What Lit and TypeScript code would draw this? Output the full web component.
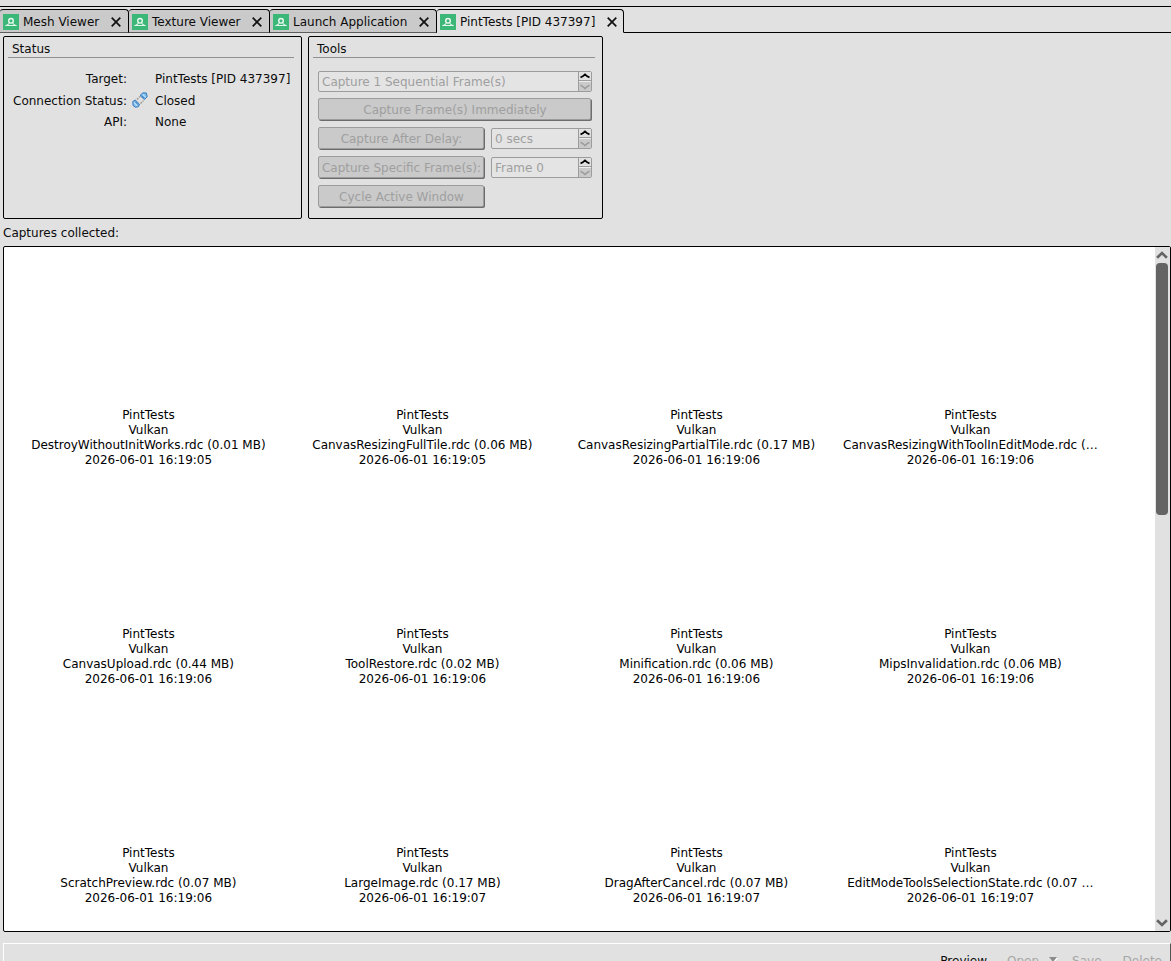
import { LitElement, html, css, svg } from "lit";
import { customElement, property } from "lit/decorators.js";

const base = css`
  * { box-sizing: border-box; }
  svg { display: block; flex: none; }
`;

@customElement("rd-tab")
class RdTab extends LitElement {
  @property() label = "";
  @property({ type: Boolean, reflect: true }) active = false;
  static styles = [base, css`
    :host { display: block; height: 24px; flex: none; }
    .tab {
      display: flex; align-items: center; width: 100%; height: 24px;
      background: #cacaca; border: 1px solid #000; border-left: 0;
      border-bottom-color: #5c5c5c; border-radius: 3px 4px 0 0; padding: 0 7px 0 3px;
    }
    :host([active]) .tab { background: #e1e1e1; border-bottom-color: #e1e1e1; padding-right: 6px; }
    .text { margin-left: 4px; flex: 1; white-space: pre; line-height: 15px; padding-top: 2px; }
    .icon { margin-top: 1px; }
    .close { margin-top: 1px; }
  `];
  render() {
    return html`<div class="tab">
      <svg class="icon" width="16" height="16" viewBox="0 0 16 16">
        <rect width="16" height="16" fill="#3bb878" />
        <circle cx="8" cy="6.8" r="2.3" fill="none" stroke="#effaf4" stroke-width="1.4" />
        <path d="M2.3 11.5H13.7" fill="none" stroke="#e3f6ec" stroke-width="1" />
        <path d="M3.6 11Q5.8 10.6 6.3 8.8M12.4 11Q10.2 10.6 9.7 8.8" fill="none" stroke="#d5f1e2" stroke-width="1.1" />
      </svg>
      <span class="text">${this.label}</span>
      <svg class="close" width="10" height="10" viewBox="0 0 10 10">
        <path d="M.7 .7L9.3 9.3M9.3 .7L.7 9.3" stroke="#111" stroke-width="1.7" />
      </svg>
    </div>`;
  }
}

@customElement("rd-spin")
class RdSpin extends LitElement {
  @property() value = "";
  static styles = [base, css`
    :host { display: block; height: 21px; }
    .box {
      display: flex; height: 21px; border: 1px solid #9c9c9c; border-radius: 2px;
      background: #e4e4e4; color: #9f9f9f;
    }
    .value { flex: 1; padding: 3px 0 0 3px; line-height: 15px; white-space: pre; }
    .steps { width: 13px; border-left: 1px solid #9c9c9c; display: flex; flex-direction: column; }
    .up { height: 9px; border-bottom: 1px solid #9c9c9c; background: #e1e1e1; }
    .down { height: 10px; background: #cacaca; border-top: 1px solid #eee; }
  `];
  render() {
    return html`<div class="box">
      <span class="value">${this.value}</span>
      <div class="steps">
        <div class="up"><svg width="12" height="8" viewBox="0 0 12 8"><path d="M1.5 5.4Q4 4.6 6 2.4Q8 4.6 10.5 5.4" fill="none" stroke="#000" stroke-width="1.7" /></svg></div>
        <div class="down"><svg width="12" height="9" viewBox="0 0 12 9"><path d="M1.5 3.2Q4 4.2 6 6.5Q8 4.2 10.5 3.2" fill="none" stroke="#9c9c9c" stroke-width="1.6" /></svg></div>
      </div>
    </div>`;
  }
}

const captures = [
  ["DestroyWithoutInitWorks.rdc (0.01 MB)", "05"],
  ["CanvasResizingFullTile.rdc (0.06 MB)", "05"],
  ["CanvasResizingPartialTile.rdc (0.17 MB)", "06"],
  ["CanvasResizingWithToolInEditMode.rdc (…", "06"],
  ["CanvasUpload.rdc (0.44 MB)", "06"],
  ["ToolRestore.rdc (0.02 MB)", "06"],
  ["Minification.rdc (0.06 MB)", "06"],
  ["MipsInvalidation.rdc (0.06 MB)", "06"],
  ["ScratchPreview.rdc (0.07 MB)", "06"],
  ["LargeImage.rdc (0.17 MB)", "07"],
  ["DragAfterCancel.rdc (0.07 MB)", "07"],
  ["EditModeToolsSelectionState.rdc (0.07 …", "07"],
];

const plug = svg`
  <path d="M5 7.5L8 4.5M8.5 11.5L11.5 8.5" stroke="#a3a099" stroke-width="1.6" stroke-dasharray="2 1" />
  <path d="M.8 9.5L3.2 8L7.5 12.2L6.5 14.6L3.5 15.3L1 13.5Z" fill="#7cbdf0" stroke="#3a79b5" stroke-width="1" />
  <path d="M8 3.5L11 .8L14.4 1L15.2 4.8L12.4 7.5Z" fill="#7cbdf0" stroke="#3a79b5" stroke-width="1" />
  <path d="M2 10.5L5.2 13.8M10.6 2.4L13.8 5.4" stroke="#b9defa" stroke-width="1.3" />
  <path d="M3 9.5L6.2 12.8M9.6 3.4L12.6 6.4" stroke="#2a6aa8" stroke-width=".8" />
`;

@customElement("app-root")
class AppRoot extends LitElement {
  static styles = [base, css`
    :host {
      display: flex; flex-direction: column; width: 1171px; height: 961px; overflow: hidden;
      background: #e1e1e1; color: #0c0c0c; font: 12px/15px "DejaVu Sans", sans-serif;
    }
    .top { height: 9px; flex: none; padding-top: 6px; }
    .top-line { height: 1px; background: #000; }
    .tabs { display: flex; height: 24px; flex: none; }
    .t1 { width: 129px; } .t2 { width: 141px; } .t3 { width: 167px; } .t4 { width: 187px; }
    .rest { flex: 1; border-bottom: 1px solid #000; }
    .panels { display: flex; gap: 6px; padding: 3px 0 0 3px; flex: none; }
    .panel { height: 183px; border: 1px solid #000; border-radius: 2px; padding: 5px 7px 0 4px; }
    .status { width: 299px; } .tools { width: 295px; }
    .title { height: 16px; border-bottom: 1px solid #919191; padding-left: 4px; line-height: 15px; }
    .fields { display: grid; grid-template-columns: 119px 16px auto; column-gap: 6px; grid-template-rows: 22px 23px 18px; padding-top: 10px; align-items: center; white-space: pre; }
    .lab { text-align: right; }
    .plug { margin: 0 0 3px -1px; }
    .form { display: flex; flex-direction: column; gap: 6px; padding: 13px 3px 0 5px; }
    .line { display: flex; gap: 6px; align-items: center; }
    .small { width: 101px; }
    .btn {
      display: block; height: 22px; width: 166px; margin: 0 1px 1px 0; border: 1px solid #9c9c9c;
      box-shadow: 1px 1px 0 #6c6c6c; border-radius: 2px; background: #cacaca; color: #9f9f9f;
      text-align: center; white-space: pre; line-height: 15px; padding: 4px 0 0 1px; flex: none;
    }
    .btn.full { width: 273px; }
    .caption { height: 27px; padding: 7px 0 0 3px; flex: none; }
    .list { margin-left: 3px; width: 1168px; height: 686px; flex: none; display: flex; border: 1px solid #000; border-radius: 2px; background: #fff; }
    .grid { flex: 1; display: grid; grid-template-columns: repeat(4, 274px); grid-auto-rows: 219px; padding-left: 7.4px; align-content: start; color: #000; }
    .item { padding-top: 161px; text-align: center; white-space: pre; }
    .scroll { width: 15px; background: #e1e1e1; display: flex; flex-direction: column; align-items: center; padding-right: 1px; }
    .thumb { width: 12px; height: 252px; margin-top: 1px; background: #646464; border-radius: 4px; }
    .spacer { flex: 1; }
    .bottom { margin: 11px 0 0 3px; height: 40px; flex: none; border: 1px solid #fff; border-right-color: #555; display: flex; padding: 10px 8px 0 0; justify-content: flex-end; color: #a6a6a6; }
    .preview { color: #0c0c0c; margin-right: 20px; }
    .arrow { margin: 3px 14px 0 10px; }
    .save { margin-right: 21px; }
  `];
  render() {
    return html`
      <div class="top"><div class="top-line"></div></div>
      <div class="tabs">
        <rd-tab class="t1" label="Mesh Viewer"></rd-tab>
        <rd-tab class="t2" label="Texture Viewer"></rd-tab>
        <rd-tab class="t3" label="Launch Application"></rd-tab>
        <rd-tab class="t4" label="PintTests [PID 437397]" active></rd-tab>
        <div class="rest"></div>
      </div>
      <div class="panels">
        <div class="panel status">
          <div class="title">Status</div>
          <div class="fields">
            <span class="lab">Target:</span><span></span><span>PintTests [PID 437397]</span>
            <span class="lab">Connection Status:</span>
            <svg class="plug" width="16" height="16" viewBox="0 0 16 16">${plug}</svg>
            <span>Closed</span>
            <span class="lab">API:</span><span></span><span>None</span>
          </div>
        </div>
        <div class="panel tools">
          <div class="title">Tools</div>
          <div class="form">
            <rd-spin value="Capture 1 Sequential Frame(s)"></rd-spin>
            <div class="btn full">Capture Frame(s) Immediately</div>
            <div class="line"><div class="btn">Capture After Delay:</div><rd-spin class="small" value="0 secs"></rd-spin></div>
            <div class="line"><div class="btn">Capture Specific Frame(s):</div><rd-spin class="small" value="Frame 0"></rd-spin></div>
            <div class="btn">Cycle Active Window</div>
          </div>
        </div>
      </div>
      <div class="caption">Captures collected:</div>
      <div class="list">
        <div class="grid">
          ${captures.map(([name, sec]) => html`<div class="item">PintTests<br />Vulkan<br />${name}<br />2026-06-01 16:19:${sec}</div>`)}
        </div>
        <div class="scroll">
          <svg width="12" height="15" viewBox="0 0 12 15"><path d="M1.1 10.8L6 6L10.9 10.8" fill="none" stroke="#646464" stroke-width="2.6" /></svg>
          <div class="thumb"></div>
          <div class="spacer"></div>
          <svg width="12" height="15" viewBox="0 0 12 15"><path d="M1.1 4.2L6 9L10.9 4.2" fill="none" stroke="#646464" stroke-width="2.6" /></svg>
        </div>
      </div>
      <div class="bottom">
        <span class="preview">Preview</span><span>Open</span>
        <svg class="arrow" width="9" height="6" viewBox="0 0 9 6"><path d="M1 1H9L5 6Z" fill="#fff" /><path d="M0 0H8L4 5Z" fill="#8c8c8c" /></svg>
        <span class="save">Save</span><span>Delete</span>
      </div>`;
  }
}
